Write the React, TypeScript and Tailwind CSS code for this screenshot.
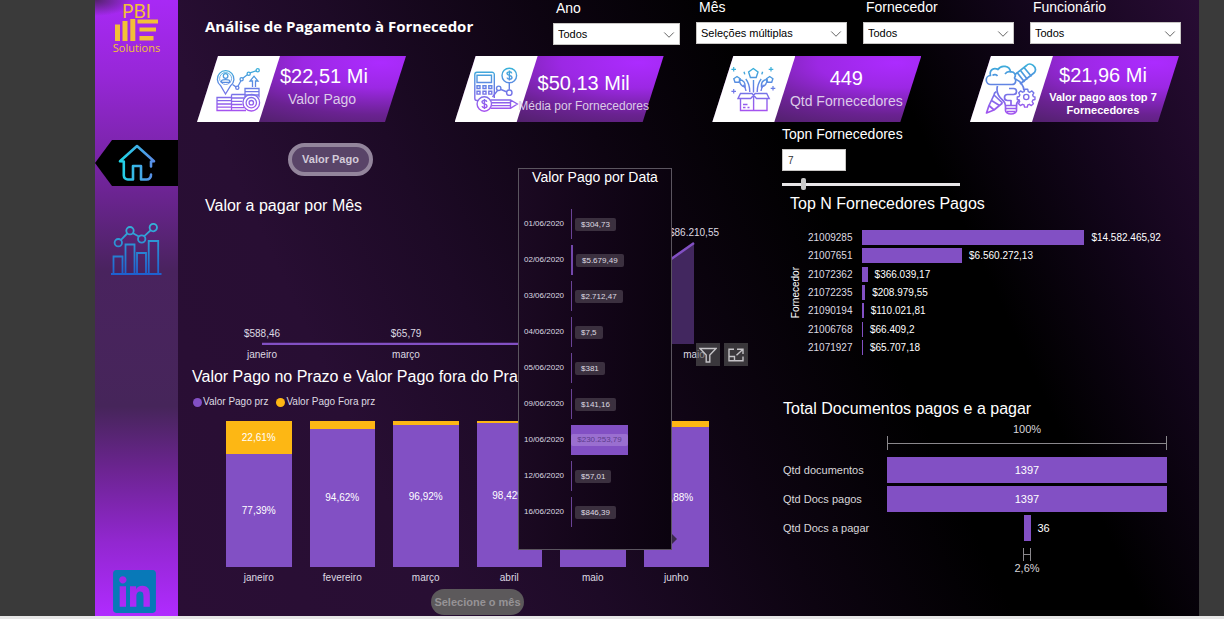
import { useState } from "react";
import type { ReactNode } from "react";
import { ChevronDown } from "lucide-react";
import { FaLinkedin } from "react-icons/fa";

const slicers = [
  { id: "ano", label: "Ano", value: "Todos", box: "w-[127px] mt-px" },
  { id: "mes", label: "Mês", value: "Seleções múltiplas", box: "w-[151px]" },
  { id: "fornecedor", label: "Fornecedor", value: "Todos", box: "w-[151px]" },
  { id: "funcionario", label: "Funcionário", value: "Todos", box: "w-[151px]" },
];

const months = ["janeiro", "março", "abril", "maio"];

const onTime = [
  { month: "janeiro", paid: 77.39, label: "77,39%", late: "22,61%" },
  { month: "fevereiro", paid: 94.62, label: "94,62%" },
  { month: "março", paid: 96.92, label: "96,92%" },
  { month: "abril", paid: 98.42, label: "98,42%" },
  { month: "maio", paid: 97.5, label: "97,50%" },
  { month: "junho", paid: 95.88, label: "95,88%" },
];

const byDate = [
  { date: "01/06/2020", value: "$304,73" },
  { date: "02/06/2020", value: "$5.679,49", strong: true },
  { date: "03/06/2020", value: "$2.712,47" },
  { date: "04/06/2020", value: "$7,5" },
  { date: "05/06/2020", value: "$381" },
  { date: "09/06/2020", value: "$141,16" },
  { date: "10/06/2020", value: "$230.253,79", full: true },
  { date: "12/06/2020", value: "$57,01" },
  { date: "16/06/2020", value: "$846,39" },
];

const suppliers = [
  { id: "21009285", amount: 14582465.92, label: "$14.582.465,92" },
  { id: "21007651", amount: 6560272.13, label: "$6.560.272,13" },
  { id: "21072362", amount: 366039.17, label: "$366.039,17" },
  { id: "21072235", amount: 208979.55, label: "$208.979,55" },
  { id: "21090194", amount: 110021.81, label: "$110.021,81" },
  { id: "21006768", amount: 66409.2, label: "$66.409,2" },
  { id: "21071927", amount: 65707.18, label: "$65.707,18" },
];

function Gradient({ id, height }: { id: string; height: number }) {
  return (
    <defs>
      <linearGradient id={id} gradientUnits="userSpaceOnUse" x1="0" y1="0" x2="0" y2={height}>
        <stop offset="0" stopColor="#35b4d8" />
        <stop offset="0.5" stopColor="#6a7be6" />
        <stop offset="1" stopColor="#a850f0" />
      </linearGradient>
    </defs>
  );
}

function InvestIcon() {
  return (
    <svg viewBox="0 0 45 45" className="h-[45px] w-[45px]" fill="none" stroke="url(#g-invest)" strokeWidth="1.3" aria-hidden="true">
      <Gradient id="g-invest" height={45} />
      <path d="M9.5 27 4.5 18.500A8.300 8.300 0 1 1 14.800 18.500Z" />
      <circle cx="9.600" cy="11.500" r="6" strokeWidth="0.800" />
      <circle cx="9.600" cy="9" r="2.300" />
      <path d="M5.500 15.300v-1.200c0-2 8.200-2 8.200 0v1.200Z" />
      <path d="M16.500 17.500l3.800 2.600M22 19.300l2.900-5.500M26.800 11.200l4.500-3.500M34 5.900l6-2.100" />
      <circle cx="21.300" cy="20.800" r="1.600" />
      <circle cx="25.600" cy="12.300" r="1.600" />
      <circle cx="32.700" cy="6.700" r="1.600" />
      <circle cx="41.700" cy="3.300" r="1.600" />
      <path d="M36.500 20v-6h-2.500l4-4.800 4 4.800h-2.500v6" />
      <path d="M1 30.500h14.500v13H1ZM1 33.700h14.500M1 37h14.500M1 40.200h14.500M15.500 27.500H29v3M15.500 27.500v16H30M15.500 31H28M15.500 34.300h11M15.500 37.500h11M15.500 40.700h12.500M29 28v-6.500h14v9M29 24.700h14M29 28h14" />
      <circle cx="35.300" cy="35.700" r="8.300" />
      <circle cx="35.300" cy="35.700" r="5.200" />
      <circle cx="35.300" cy="35.700" r="2.200" />
    </svg>
  );
}

function CalculatorIcon() {
  return (
    <svg viewBox="0 0 45 45" className="h-[45px] w-[45px]" fill="none" stroke="url(#g-calc)" strokeWidth="1.400" aria-hidden="true">
      <Gradient id="g-calc" height={45} />
      <path d="M4 33.500H3A2.300 2.300 0 0 1 .8 31.200V7.500A2.300 2.300 0 0 1 3 5.200H18A2.300 2.300 0 0 1 20.300 7.500V31" />
      <path d="M3 8.200H17.500V15.500H3ZM3 18.700H6V21.500H3ZM9 18.700h3v2.800H9ZM14.800 18.700h3v2.800h-3ZM3 24.300h3v2.800H3ZM9 24.300h3v2.800H9ZM14.800 24.300h3v2.800h-3Z" />
      <circle cx="35.300" cy="8.500" r="7.300" />
      <path d="M37.800 6.300c-.5-2-4.800-2-4.800.2 0 2.500 5 1.400 5 4 0 2.300-4.500 2.300-5 .2M35.400 3.600v9.800M35.300 15.800v7M33 25l-6-2.500M23.500 23.500 18.500 30" />
      <circle cx="35.300" cy="25.700" r="2.700" />
      <circle cx="24.700" cy="21.300" r="2.200" />
      <circle cx="10.300" cy="37" r="7.200" />
      <path d="M12.800 34.800c-.5-2-4.800-2-4.800.2 0 2.500 5 1.400 5 4 0 2.300-4.500 2.300-5 .2M10.400 32.100v9.800" />
      <path d="M16.500 33H36.500L43.300 37 36.500 41.300H16.500M17.500 35.800H36.500M17.500 38.600H36.500M36.500 33v8.300" />
    </svg>
  );
}

function GiftIcon() {
  return (
    <svg viewBox="0 0 47 45" className="h-[45px] w-[47px]" fill="none" stroke="url(#g-gift)" strokeWidth="1.400" aria-hidden="true">
      <Gradient id="g-gift" height={45} />
      <path d="M23.300 1.500 28 5l-1.800 5.500h-5.800L18.600 5ZM7 9.500l3.200 2.200-1.200 3.600H5L3.800 11.700ZM39.700 9.500l3.200 2.200-1.200 3.600h-4l-1.200-3.600Z" />
      <path d="M3.700 0v4.600M1.400 2.300H6M41 0v4.600M38.700 2.300h4.600M3.700 22v4.600M1.400 24.300H6M43 19v4.600M40.700 21.300h4.600" strokeWidth="1.200" />
      <path d="M23.500 13v12.500M19.800 25c0-5-1.200-9.500-4-13M27.200 25c0-5 1.200-9.500 4-13M16 24c-.4-2.600-1.200-4.600-2.500-6.300M31 24c.4-2.600 1.200-4.600 2.500-6.300M14 4.800l.8 2.600M32.600 4.800l-.8 2.600" />
      <path d="M9.500 12.500c4 .5 6 3.500 5.500 7.500-3.500-.8-5.500-3.500-5.500-7.500ZM37 12.500c-4 .5-6 3.500-5.500 7.500 3.500-.8 5.500-3.500 5.500-7.500Z" />
      <path d="M10.500 26.500h11.500l1.600 1.800 1.600-1.800h11.500l2.500 5H26.500l-2.900-3.200-2.900 3.200H8Z" />
      <path d="M10.500 31.500v12H37v-12M23.600 29v14.500M13 37.500h4.500M13 40.500h2.500M17.500 40.500h2" />
    </svg>
  );
}

function IdeaIcon() {
  return (
    <svg viewBox="0 0 54 54" className="h-[54px] w-[54px]" fill="none" stroke="url(#g-idea)" strokeWidth="1.700" strokeLinejoin="round" aria-hidden="true">
      <Gradient id="g-idea" height={54} />
      <path d="M7 22.500a4.500 4.500 0 0 1-.5-9C5 8 10 5 14 7.500c3-5 12-4 12.500 2.500 4-.5 6 3 4 6 2.500 2.500 1 6.500-2.500 6.500ZM8.500 13.500c1.500-1.500 4-1 5 .5M21 12c1.500-2 4-2.500 5.500-2" />
      <path d="M31 12.500 42.500 3.500C46-.5 54 5 50.500 10.500L36 22M40 5.500l7.500 9M36.500 8.500l7 9M33.500 11l7 9" />
      <path d="M13.500 24c-2 7 2 11.500 5.500 14.500 2 1.800 2.500 3 2.500 5h11c0-2.500 1-4 3-6M31 17c5 2 8.500 6 9 11.500" />
      <path d="M21.500 43.500v5c0 1.500 2 3.500 5.500 3.500s5.500-2 5.500-3.500v-5M21.500 46.500h11M23 49.500h8M27 43.500v-5h-3.500a3 3 0 0 1 0-6h6a3 3 0 0 0 0-6H25" />
      <path d="M10 33 5 43.500 2.500 51 10 48l8.500-7M5 43.500l5 4.500M10 33l8.500 8M7.500 38.500l8 5M12.500 29.500c-2 1-2.500 2-2.500 3.500" />
      <g transform="translate(7 5.500) scale(0.820)">
        <circle cx="43" cy="36" r="3.200" />
        <path d="M41.200 26.500h3.600l.6 2.800 2 .9 2.500-1.600 2.400 2.500-1.500 2.400.8 2 2 .5v3l-2.500.6-.9 2 1.500 2.500-2.500 2.300-2.300-1.500-2 .8-.6 2.600h-3.400l-.6-2.600-2-.8-2.500 1.500-2.400-2.400 1.600-2.400-.9-2-2.100-.6v-3l2.300-.6.9-2-1.500-2.400 2.300-2.400 2.400 1.500 2-.8Z" />
      </g>
    </svg>
  );
}

function HomeIcon() {
  return (
    <svg viewBox="0 0 38 38" className="h-[38px] w-[38px]" fill="none" stroke="url(#g-home)" strokeWidth="2.600" strokeLinecap="round" strokeLinejoin="round" aria-hidden="true">
      <defs>
        <linearGradient id="g-home" gradientUnits="userSpaceOnUse" x1="2" y1="0" x2="36" y2="0">
          <stop offset="0" stopColor="#1fd6e6" />
          <stop offset="1" stopColor="#5b8be6" />
        </linearGradient>
      </defs>
      <path d="M33 22.500V17.500l3-.2L19 2 2 17.300l3.800.2V31.500A4 4 0 0 0 10 35.500h5V22h8v13.500h5.500a4.500 4.500 0 0 0 4.500-5" />
    </svg>
  );
}

function TrendIcon() {
  return (
    <svg viewBox="0 0 51 53" className="h-[53px] w-[51px]" fill="none" stroke="url(#g-trend)" strokeWidth="1.800" aria-hidden="true">
      <defs>
        <linearGradient id="g-trend" gradientUnits="userSpaceOnUse" x1="0" y1="0" x2="0" y2="53">
          <stop offset="0" stopColor="#35b4d8" />
          <stop offset="1" stopColor="#1d5ed0" />
        </linearGradient>
      </defs>
      <path d="M0 51H50.500M2.500 51V33.500H11.500V51M14.500 51V21.500H23.500V51M26 51V30H35V51M37.700 51V18H47.200V51M10 16.800 16.200 10.500M22 10.300 27.800 13.500M33.300 13.200 39.800 7.200" />
      <circle cx="7.300" cy="19.700" r="3.700" />
      <circle cx="19" cy="7.700" r="3.700" />
      <circle cx="30.700" cy="16" r="3.700" />
      <circle cx="42.300" cy="4.600" r="3.700" />
    </svg>
  );
}

function Kpi({ icon, value, label, body, small }: { icon: ReactNode; value: string; label: string; body: string; small: string }) {
  return (
    <article className="relative h-[66px] w-[209px]">
      <div className="absolute inset-0 bg-[radial-gradient(ellipse_at_88%_10%,#ac2bff_0%,#9c28e4_30%,#6a2291_62%,#47205c_95%)] [clip-path:polygon(21px_0,100%_0,188px_100%,0_100%)]" />
      <div className="absolute inset-y-0 left-0 w-[83px] bg-white [clip-path:polygon(21px_0,100%_0,62px_100%,0_100%)]" />
      <div className="relative flex h-full items-center">
        <div className="flex w-[83px] shrink-0 justify-center">{icon}</div>
        <div className={body}>
          <p className="text-[20px] leading-6 text-white">{value}</p>
          <p className={small}>{label}</p>
        </div>
      </div>
    </article>
  );
}

function Sidebar() {
  return (
    <aside className="flex w-[83px] shrink-0 flex-col items-center bg-[radial-gradient(40px_16px_at_0%_0%,#52226b_0%,transparent_100%),linear-gradient(180deg,#a829f5_0%,#9727d8_12%,#6f2497_30%,#49235e_44%,#46255a_66%,#6b2490_76%,#9227d0_88%,#b02bff_100%)]">
      <div className="flex flex-col items-center text-[#f2c037]">
        <span className="text-[19px] leading-[22px]" style={{ fontFamily: "Lato, sans-serif" }}>PBI</span>
        <svg viewBox="0 0 43 22" className="-mt-[3px] h-[22px] w-[43px]" fill="currentColor" aria-hidden="true">
          <path d="M0 5.500h5V22H0ZM7.500 2h5v20h-5ZM15.300 0h5v22h-5ZM22.500.5H43v4H22.500ZM24.500 8.500H41v4H24.500ZM24.500 17H38.500v4.500h-14Z" />
        </svg>
        <span className="text-[11px] leading-[14px]" style={{ fontFamily: '"Open Sans", sans-serif' }}>Solutions</span>
      </div>
      <nav className="mt-[85px] flex w-full flex-col items-center gap-[37px]">
        <a href="#inicio" aria-label="Início" className="flex h-[46px] w-full items-center justify-center bg-black [clip-path:polygon(17px_0,100%_0,100%_100%,17px_100%,0_50%)]">
          <HomeIcon />
        </a>
        <a href="#graficos" aria-label="Gráficos">
          <TrendIcon />
        </a>
      </nav>
      <a href="#linkedin" aria-label="LinkedIn" className="mt-auto pr-1 text-[#0879b8]">
        <FaLinkedin className="h-[49px] w-[43px]" />
      </a>
    </aside>
  );
}

function Header() {
  return (
    <header className="flex h-14 items-start justify-between pr-[18px] pl-[27px]">
      <h1 className="mt-[14px] text-[15px] leading-6 font-bold" style={{ fontFamily: '"Open Sans", sans-serif' }}>
        Análise de Pagamento à Fornecedor
      </h1>
      <div className="flex gap-4">
        {slicers.map((s) => (
          <div key={s.id} className={s.box}>
            <label htmlFor={s.id} className="block h-5 pl-[3px] text-[14px] leading-[14px]">
              {s.label}
            </label>
            <div className="relative mt-[2px]">
              <select id={s.id} className="block h-[22px] w-full appearance-none border border-[#c8c6c4] bg-white pl-1 text-[11px] text-black">
                <option>{s.value}</option>
              </select>
              <ChevronDown className="pointer-events-none absolute top-[3px] right-[2px] h-[18px] w-[18px] text-[#555]" strokeWidth={1.2} />
            </div>
          </div>
        ))}
      </div>
    </header>
  );
}

function DateTooltip() {
  return (
    <section className="absolute top-[46px] left-[340px] h-[382px] w-[154px] border border-[#5b555f] bg-linear-to-r from-[#1b0922] to-[#0b030f]">
      <h2 className="text-center text-[14px] leading-4">Valor Pago por Data</h2>
      <ul className="mt-[21px]">
        {byDate.map((d) => (
          <li key={d.date} className="flex h-9 items-center pl-[5px] text-[8px] text-[#dedae2]">
            <span className="w-[47px]">{d.date}</span>
            {d.full ? (
              <span className="flex h-[30px] w-[57px] items-center bg-[#8250c4]">
                <span className="w-full rounded-[2px] bg-[#9a6fd0] text-center leading-[12px] text-[#5d3c8c]">{d.value}</span>
              </span>
            ) : (
              <>
                <span className={d.strong ? "h-[30px] w-0.5 bg-[#7347ac]" : "h-[30px] w-px bg-[#6a4396]"} />
                <span className="ml-[3px] rounded-[2px] bg-[#3b303f] px-[6px] leading-[13px]">{d.value}</span>
              </>
            )}
          </li>
        ))}
      </ul>
      <span className="absolute top-[365px] -right-[6px] h-[10px] w-[5px] bg-[#3b2a4c] [clip-path:polygon(0_0,100%_50%,0_100%)]" />
    </section>
  );
}

function MonthlyChart() {
  return (
    <section>
      <h2 className="mt-[18px] pl-[27px] text-[16px] leading-[23px]">Valor a pagar por Mês</h2>
      <div className="relative ml-3 text-[10px] text-[#dedae2]">
        <svg viewBox="0 0 576 128" preserveAspectRatio="none" className="block h-[128px] w-full" aria-hidden="true">
          <path d="M360 127 504 26V127Z" fill="#42275f" />
          <path d="M72 127H360L504 26" fill="none" stroke="#8250c4" strokeWidth="2.500" vectorEffect="non-scaling-stroke" />
        </svg>
        <div className="grid grid-cols-4 text-center leading-5">
          {months.map((m) => (
            <span key={m}>{m}</span>
          ))}
        </div>
        <div className="absolute inset-x-0 top-0 grid grid-cols-4 text-center leading-4">
          <span className="mt-[109px]">$588,46</span>
          <span className="mt-[109px]">$65,79</span>
          <span />
          <span className="mt-2">$86.210,55</span>
        </div>
        <div className="absolute right-[18px] -bottom-px flex gap-1">
          <button type="button" aria-label="Filtros" className="flex h-[23px] w-6 items-center justify-center bg-[#5a5a5a]/60">
            <svg viewBox="0 0 18 16" className="h-4 w-[18px]" fill="none" stroke="#c4c2c6" strokeWidth="1.400" aria-hidden="true">
              <path d="M1 1.500H17L10.800 8V15H7.200V8Z" />
            </svg>
          </button>
          <button type="button" aria-label="Modo de foco" className="flex h-[23px] w-6 items-center justify-center bg-[#5a5a5a]/60">
            <svg viewBox="0 0 16 14" className="h-[14px] w-4" fill="none" stroke="#c4c2c6" strokeWidth="1.400" aria-hidden="true">
              <path d="M6 1.200H1V12.800H15V8.500M1 8.500H6.500V12.800M9 1.200h6V6M15 1.200 8.500 7.200" />
            </svg>
          </button>
        </div>
      </div>
    </section>
  );
}

function OnTimeChart() {
  return (
    <section>
      <h2 className="pl-[14px] text-[16px] leading-6">Valor Pago no Prazo e Valor Pago fora do Prazo</h2>
      <div className="mt-[5px] flex gap-2 pl-[15px] text-[10px] leading-4 text-[#dedae2]">
        <span className="flex items-center gap-px">
          <i className="h-[9px] w-[9px] rounded-full bg-[#8250c4]" />
          Valor Pago prz
        </span>
        <span className="flex items-center gap-px">
          <i className="h-[9px] w-[9px] rounded-full bg-[#fdb714]" />
          Valor Pago Fora prz
        </span>
      </div>
      <div className="mt-[11px] grid grid-cols-6 pr-[48px] pl-[39px] text-center text-[10px]">
        {onTime.map((m) => (
          <div key={m.month}>
            <div className="mx-[9px] flex h-[146px] flex-col text-white">
              <div className="flex items-center justify-center bg-[#fdb714]" style={{ height: `${100 - m.paid}%` }}>
                {m.late}
              </div>
              <div className="flex flex-1 items-center justify-center bg-[#8250c4]">{m.label}</div>
            </div>
            <div className="mt-[3px] leading-4 text-[#dedae2]">{m.month}</div>
          </div>
        ))}
      </div>
    </section>
  );
}

function TopSuppliers() {
  const [top, setTop] = useState(7);
  return (
    <section>
      <label htmlFor="topn" className="mt-1 block text-[14px] leading-4">Topn Fornecedores</label>
      <input
        id="topn"
        value={top}
        onChange={(e) => setTop(Number(e.target.value) || 1)}
        className="mt-[7px] block h-[22px] w-16 border border-[#c8c6c4] bg-white pl-[5px] text-[10px] text-[#333]"
      />
      <input
        type="range"
        aria-label="Quantidade de fornecedores"
        min={1}
        max={56}
        value={top}
        onChange={(e) => setTop(Number(e.target.value))}
        className="mt-[7px] block h-3 w-[178px] appearance-none bg-transparent [&::-webkit-slider-runnable-track]:h-[3px] [&::-webkit-slider-runnable-track]:bg-[#e8e6e8] [&::-webkit-slider-thumb]:-mt-[5px] [&::-webkit-slider-thumb]:h-3 [&::-webkit-slider-thumb]:w-[5px] [&::-webkit-slider-thumb]:appearance-none [&::-webkit-slider-thumb]:rounded-[2px] [&::-webkit-slider-thumb]:bg-[#c8c8c8]"
      />
      <h2 className="mt-1 pl-2 text-[16px] leading-5">Top N Fornecedores Pagos</h2>
      <div className="mt-4 flex pl-[6px] text-[10px]">
        <div className="mt-[35px] flex h-[55px] w-4 items-center justify-center">
          <span className="rotate-180 leading-4 [writing-mode:vertical-rl]">Fornecedor</span>
        </div>
        <ul className="flex h-[125px] flex-1 flex-col justify-between pl-1">
          {suppliers.map((s) => (
            <li key={s.id} className="flex h-[15px] items-center">
              <span className="w-[54px] text-[#dedae2]">{s.id}</span>
              <div className="flex h-full flex-1 items-center">
                <div className="h-full min-w-px bg-[#8250c4]" style={{ width: `${(s.amount / suppliers[0].amount) * 66}%` }} />
                <span className="pl-[7px]">{s.label}</span>
              </div>
            </li>
          ))}
        </ul>
      </div>
    </section>
  );
}

function DocumentFunnel() {
  return (
    <section className="mt-[44px] pr-[32px] pl-px text-[11px] text-[#d8d6da]">
      <h2 className="text-[16px] leading-5 text-white">Total Documentos pagos e a pagar</h2>
      <div className="grid grid-cols-[104px_1fr] items-center gap-y-[3px]">
        <div className="col-start-2 mt-[3px] text-center">
          <div className="leading-[14px]">100%</div>
          <div className="flex h-[14px] items-center border-x border-[#8a888c]">
            <div className="h-px w-full bg-[#8a888c]" />
          </div>
        </div>
        <span className="mt-1">Qtd documentos</span>
        <div className="mt-1 h-[26px] bg-[#8250c4] text-center leading-[26px] text-white">1397</div>
        <span>Qtd Docs pagos</span>
        <div className="h-[26px] bg-[#8250c4] text-center leading-[26px] text-white">1397</div>
        <span>Qtd Docs a pagar</span>
        <div className="flex justify-center">
          <div className="relative h-[26px] w-[7px] bg-[#8250c4]">
            <span className="absolute top-0 left-[14px] leading-[26px] text-white">36</span>
          </div>
        </div>
        <div className="col-start-2 mt-1 flex flex-col items-center">
          <div className="flex h-[13px] w-2 items-center border-x border-[#8a888c]">
            <div className="h-px w-full bg-[#8a888c]" />
          </div>
          <div className="leading-[14px]">2,6%</div>
        </div>
      </div>
    </section>
  );
}

export default function App() {
  return (
    <div className="flex min-h-screen flex-col bg-[#e6e6e6] pb-[3px] text-white" style={{ fontFamily: '"Liberation Sans", Arial, sans-serif' }}>
      <div className="flex flex-1 bg-[#3a3a3a] pr-[25px] pl-[95px]">
        <Sidebar />
        <main className="min-w-0 flex-1 overflow-hidden bg-[linear-gradient(65deg,#2a0e35_0%,#280e33_20%,#1d0a26_33%,#0d0411_49%,#000_64%,#000_74%,#12051a_86%,#280c34_100%)]">
          <Header />
          <div className="flex justify-between pr-5 pl-[19px]">
            <Kpi icon={<InvestIcon />} value="$22,51 Mi" label="Valor Pago" body="w-[84px] shrink-0 pb-[4px] text-center whitespace-nowrap" small="text-[14px] leading-[22px] text-[#dccbe8]" />
            <Kpi icon={<CalculatorIcon />} value="$50,13 Mil" label="Média por Fornecedores" body="-ml-5 w-[132px] shrink-0 pt-[10px] text-center whitespace-nowrap" small="text-[12px] leading-[22px] text-[#dccbe8]" />
            <Kpi icon={<GiftIcon />} value="449" label="Qtd Fornecedores" body="-ml-[7px] w-[116px] shrink-0 pb-px text-center whitespace-nowrap" small="text-[14px] leading-[22px] text-[#dccbe8]" />
            <Kpi icon={<IdeaIcon />} value="$21,96 Mi" label="Valor pago aos top 7 Fornecedores" body="-ml-[10px] w-[120px] shrink-0 pt-px text-center" small="mt-1 text-[11px] leading-[13px] font-bold text-white" />
          </div>
          <div className="grid grid-cols-[588fr_433fr]">
            <div className="relative min-w-0">
              <button type="button" className="mt-[21px] ml-[110px] block h-[33px] w-[85px] rounded-full border-4 border-[#93859c] bg-[#594468] text-[11px] font-bold text-[#d3cbd9]">
                Valor Pago
              </button>
              <MonthlyChart />
              <OnTimeChart />
              <button type="button" className="mt-[3px] -mb-px ml-[253px] block h-[26px] w-[93px] rounded-full bg-[#5c595b] text-[11px] font-bold whitespace-nowrap text-[#969396]">
                Selecione o mês
              </button>
              <DateTooltip />
            </div>
            <div className="min-w-0 pl-4">
              <TopSuppliers />
              <DocumentFunnel />
            </div>
          </div>
        </main>
      </div>
    </div>
  );
}
